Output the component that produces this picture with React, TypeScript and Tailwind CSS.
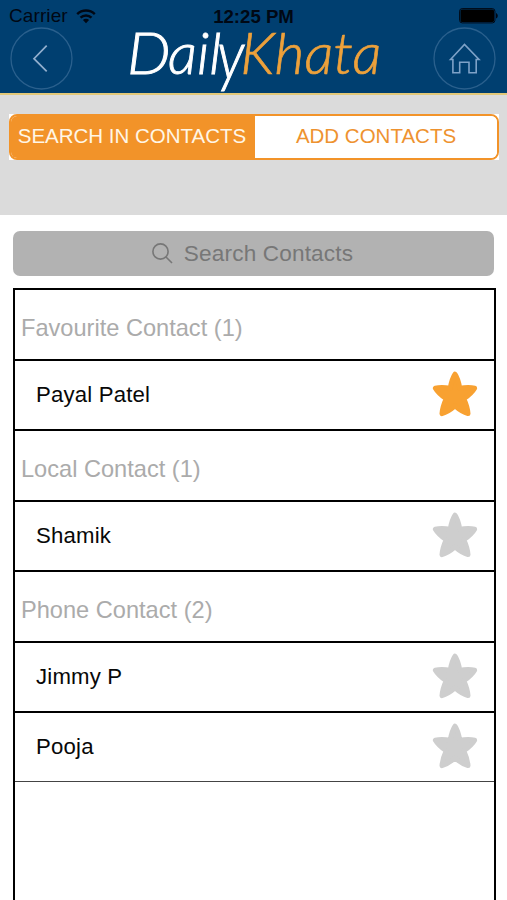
import { useState } from 'react';

const SECTIONS = [
  { title: 'Favourite Contact', contacts: [{ name: 'Payal Patel', favourite: true }] },
  { title: 'Local Contact', contacts: [{ name: 'Shamik', favourite: false }] },
  {
    title: 'Phone Contact',
    contacts: [
      { name: 'Jimmy P', favourite: false },
      { name: 'Pooja', favourite: false },
    ],
  },
];

function WifiIcon() {
  return (
    <svg viewBox="0 0 20 15" className="w-5 h-[15px]" fill="none" stroke="#000814" strokeWidth="2.4">
      <path d="M1.2 5.2a12.4 12.4 0 0 1 17.6 0" />
      <path d="M4.5 8.7a7.8 7.8 0 0 1 11 0" />
      <path d="M10 14.2 6.9 11a4.4 4.4 0 0 1 6.2 0z" fill="#000814" stroke="none" />
    </svg>
  );
}

function BatteryIcon() {
  return (
    <svg viewBox="0 0 39 16" className="w-[39px] h-4">
      <rect x="0.6" y="0.6" width="35.3" height="14.3" rx="2.6" fill="none" stroke="#000814" />
      <rect x="1.500" y="1.500" width="33.500" height="12.500" rx="1.6" fill="#000" />
      <path d="M37 5v5.6c2.4-.9 2.4-4.7 0-5.6z" fill="#000814" />
    </svg>
  );
}

function StarIcon({ active }: { active: boolean }) {
  return (
    <svg
      viewBox="0 0 46 46"
      className={`w-[46px] h-[46px] -mt-[3px] ${active ? 'text-[#f8a131]' : 'text-[#cecece]'}`}
      fill="currentColor"
      stroke="currentColor"
      strokeWidth="5"
      strokeLinejoin="round"
    >
      <path d="M23 3.200Q26 7.500 27.800 17.200 37 15.800 42.600 17.200 39.500 22.500 31.800 27.700 35.600 36 36 42.600 30 41 23 34.900 16 41 10 42.600 10.400 36 14.200 27.700 6.500 22.500 3.400 17.200 9 15.800 18.200 17.200 20 7.500 23 3.200z" />
    </svg>
  );
}

function Logo() {
  return (
    <h1
      aria-label="DailyKhata"
      className="flex items-start w-[252px] h-[63px] text-[58px] leading-none font-light italic font-['Lato',sans-serif]"
    >
      <span className="flex -mt-1 text-white [-webkit-text-stroke:0.9px_#fff]">
        <span className="inline-block origin-left scale-x-[1.06]">D</span>
        <span>a</span>
        <span>i</span>
        <span>l</span>
        <span className="inline-block -ml-[4px] origin-[50%_22px] scale-y-[1.18]">y</span>
      </span>
      <span className="-mt-1 -ml-[4px] text-[#eda13b] [-webkit-text-stroke:0.7px_#eda13b]">Khata</span>
    </h1>
  );
}

export default function App() {
  const [tab, setTab] = useState('search');

  const tabClass = (name: string) =>
    tab === name ? 'bg-[#f29329] text-[#fff6e6]' : 'bg-white text-[#ee922f]';

  return (
    <div className="w-full h-[900px] overflow-hidden bg-white flex flex-col font-['Liberation_Sans',Arial,sans-serif]">
      {/* Header */}
      <header className="h-[95px] shrink-0 bg-[#003f70] border-b-2 border-[#e3c878]">
        <div className="grid grid-cols-[1fr_auto_1fr] items-start pl-[9px] pr-[9px] pt-[6px] h-[27px] text-[#000814]">
          <div className="flex items-center gap-2 leading-5">
            <span className="text-[19px] tracking-[0.1px]">Carrier</span>
            <WifiIcon />
          </div>
          <div className="text-[18.6px] leading-[21px] font-bold">12:25 PM</div>
          <div className="pt-[2px] justify-self-end">
            <BatteryIcon />
          </div>
        </div>
        <div className="flex justify-between pl-[10px] pr-[11px]">
          <button aria-label="Back" className="w-[63px] h-[63px]">
            <svg viewBox="0 0 63 63" fill="none">
              <circle cx="31.5" cy="31.5" r="30.5" stroke="#2a608d" strokeWidth="1.3" />
              <path d="M36.7 18.7 24 31.7 36.7 44.3" stroke="#92afce" strokeWidth="1.7" />
            </svg>
          </button>
          <Logo />
          <button aria-label="Home" className="w-[63px] h-[63px]">
            <svg viewBox="0 0 63 63" fill="none">
              <circle cx="31.5" cy="31.5" r="30.5" stroke="#2a608d" strokeWidth="1.3" />
              <path
                d="M17.5 32.5 31.5 17.5 46 32.5H43.2V45.7H36V35.3H26.7V45.7H19.9V32.5z"
                stroke="#7ea2c8"
                strokeWidth="1.6"
              />
            </svg>
          </button>
        </div>
      </header>

      {/* Tabs */}
      <div className="h-[120px] shrink-0 bg-[#dbdbdb] pl-[9px] pr-2 pt-[19px]">
        <div className="bg-white h-[46px]">
          <div className="flex h-full rounded-lg border-2 border-[#f29329] overflow-hidden text-[20.5px]">
            <button
              onClick={() => setTab('search')}
              className={`w-[245px] -ml-px pb-px pr-px whitespace-nowrap ${tabClass('search')}`}
            >
              SEARCH IN CONTACTS
            </button>
            <button
              onClick={() => setTab('add')}
              className={`flex-1 pb-px whitespace-nowrap ${tabClass('add')}`}
            >
              ADD CONTACTS
            </button>
          </div>
        </div>
      </div>

      {/* Search */}
      <div className="mt-4 ml-[13px] mr-[13px] h-[45px] shrink-0 rounded-[7px] bg-[#b2b2b2] flex items-center justify-center gap-[11px] pr-[2px] text-[#777]">
        <svg viewBox="0 0 21 21" className="w-[21px] h-[21px]" fill="none" stroke="currentColor" strokeWidth="1.6">
          <circle cx="8.5" cy="8.5" r="7.6" />
          <path d="m14 14 6 6" />
        </svg>
        <span className="text-[22.6px] tracking-[0.15px]">Search Contacts</span>
      </div>

      {/* Contact list */}
      <div className="mt-[12px] ml-[13px] mr-[11px] flex-1 border-2 border-b-0 border-black">
        {SECTIONS.map((section, i) => (
          <div key={section.title} className={i === SECTIONS.length - 1 ? 'border-b border-[#444]' : 'border-b-2 border-black'}>
            <h2 className="h-[71px] border-b-2 border-black pl-[6px] pt-[9px] flex items-center text-[23.6px] text-[#ababab]">
              {section.title} ({section.contacts.length})
            </h2>
            <div className="divide-y-2 divide-black">
              {section.contacts.map((contact) => (
                <div
                  key={contact.name}
                  className="h-[68px] not-last:h-[70px] flex items-center justify-between pl-[21px] pr-4 text-[22.2px] tracking-[0.18px] text-[#080808]"
                >
                  {contact.name}
                  <StarIcon active={contact.favourite} />
                </div>
              ))}
            </div>
          </div>
        ))}
      </div>
    </div>
  );
}
